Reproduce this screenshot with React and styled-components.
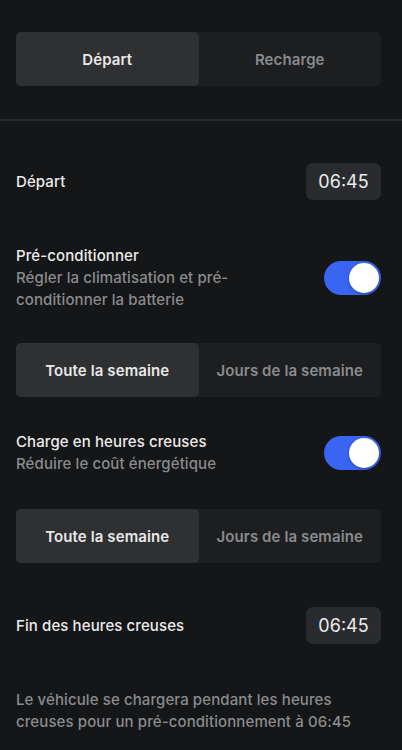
import React, { useState } from 'react';
import styled, { createGlobalStyle } from 'styled-components';

const GlobalStyle = createGlobalStyle`
  html, body {
    margin: 0;
    padding: 0;
    background: #151618;
  }
  body {
    font-family: Inter, "Noto Sans", "Liberation Sans", sans-serif;
    -webkit-font-smoothing: antialiased;
  }
`;

const Screen = styled.div`
  width: 402px;
  min-height: 750px;
  background: #151618;
  color: #ececec;
  padding-top: 32px;
  box-sizing: border-box;
`;

const Section = styled.div`
  padding: 0 21px 0 16px;
`;

const Segmented = styled.div`
  display: grid;
  grid-template-columns: 1fr 1fr;
  height: 54px;
  background: #1d1e20;
  border-radius: 5px;
  margin-top: ${(p) => p.$top || 0}px;
`;

const Segment = styled.div`
  display: flex;
  align-items: center;
  justify-content: center;
  border-radius: 5px;
  font-size: 15px;
  font-weight: 600;
  letter-spacing: 0.1px;
  color: ${(p) => (p.$active ? '#e8e8e8' : '#8a8b8d')};
  background: ${(p) => (p.$active ? '#2f3032' : 'transparent')};
`;

const Divider = styled.div`
  height: 2px;
  background: #2a2b2d;
  margin-top: 33px;
`;

const Row = styled.div`
  display: flex;
  align-items: center;
  justify-content: space-between;
  margin-top: ${(p) => p.$top || 0}px;
`;

const Label = styled.div`
  font-size: 15px;
  font-weight: 500;
  line-height: 22px;
  letter-spacing: 0.1px;
  color: #ececec;
`;

const TextBlock = styled.div`
  max-width: 234px;
`;

const Hint = styled.div`
  font-size: 15px;
  font-weight: 500;
  line-height: 22px;
  letter-spacing: 0.1px;
  color: #8a8b8d;
`;

const TimeBox = styled.div`
  width: 75px;
  height: 37px;
  border-radius: 7px;
  background: #2a2b2e;
  display: flex;
  align-items: center;
  justify-content: center;
  font-size: 18px;
  font-weight: 400;
  color: #ececec;
`;

const Track = styled.button`
  width: 57px;
  height: 34px;
  border: none;
  border-radius: 17px;
  background: ${(p) => (p.$on ? '#3a64f2' : '#3a3b3e')};
  display: flex;
  align-items: center;
  justify-content: ${(p) => (p.$on ? 'flex-end' : 'flex-start')};
  padding: 0 2px;
  box-sizing: border-box;
  cursor: pointer;
`;

const Knob = styled.span`
  width: 30px;
  height: 30px;
  border-radius: 50%;
  background: #ffffff;
  box-shadow: 0 1px 3px rgba(0, 0, 0, 0.3);
`;

const Footer = styled.p`
  margin: 45px 0 0;
  font-size: 15px;
  font-weight: 500;
  line-height: 22px;
  letter-spacing: 0.1px;
  color: #8a8b8d;
`;

const Toggle = ({ on, onClick }) => (
  <Track $on={on} onClick={onClick}>
    <Knob />
  </Track>
);

const SegmentBar = ({ options, value, top, onChange }) => (
  <Segmented $top={top}>
    {options.map((o) => (
      <Segment key={o} $active={o === value} onClick={() => onChange(o)}>
        {o}
      </Segment>
    ))}
  </Segmented>
);

const weekOptions = ['Toute la semaine', 'Jours de la semaine'];

export default function App() {
  const [mode, setMode] = useState('Départ');
  const [precond, setPrecond] = useState(true);
  const [offPeak, setOffPeak] = useState(true);
  const [week1, setWeek1] = useState(weekOptions[0]);
  const [week2, setWeek2] = useState(weekOptions[0]);

  return (
    <>
      <GlobalStyle />
      <Screen>
        <Section>
          <SegmentBar options={['Départ', 'Recharge']} value={mode} onChange={setMode} />
        </Section>
        <Divider />
        <Section>
          <Row $top={42}>
            <Label>Départ</Label>
            <TimeBox>06:45</TimeBox>
          </Row>

          <Row $top={45}>
            <TextBlock>
              <Label>Pré-conditionner</Label>
              <Hint>Régler la climatisation et pré-conditionner la batterie</Hint>
            </TextBlock>
            <Toggle on={precond} onClick={() => setPrecond(!precond)} />
          </Row>

          <SegmentBar options={weekOptions} value={week1} top={32} onChange={setWeek1} />

          <Row $top={34}>
            <TextBlock>
              <Label>Charge en heures creuses</Label>
              <Hint>Réduire le coût énergétique</Hint>
            </TextBlock>
            <Toggle on={offPeak} onClick={() => setOffPeak(!offPeak)} />
          </Row>

          <SegmentBar options={weekOptions} value={week2} top={34} onChange={setWeek2} />

          <Row $top={44}>
            <Label>Fin des heures creuses</Label>
            <TimeBox>06:45</TimeBox>
          </Row>

          <Footer>
            Le véhicule se chargera pendant les heures creuses pour un pré-conditionnement à 06:45
          </Footer>
        </Section>
      </Screen>
    </>
  );
}
